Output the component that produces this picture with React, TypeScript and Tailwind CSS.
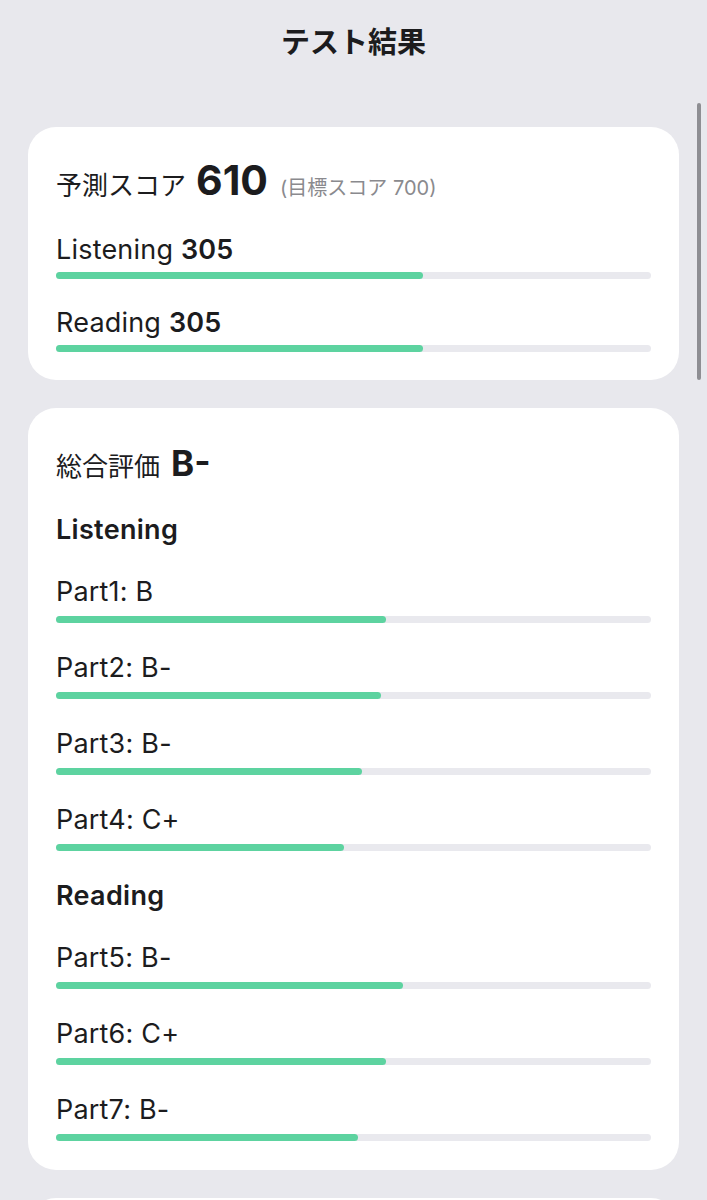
import React from "react";

type Part = { label: string; grade: string; ratio: number };

const listeningParts: Part[] = [
  { label: "Part1", grade: "B", ratio: 0.554 },
  { label: "Part2", grade: "B-", ratio: 0.546 },
  { label: "Part3", grade: "B-", ratio: 0.514 },
  { label: "Part4", grade: "C+", ratio: 0.484 },
];

const readingParts: Part[] = [
  { label: "Part5", grade: "B-", ratio: 0.583 },
  { label: "Part6", grade: "C+", ratio: 0.555 },
  { label: "Part7", grade: "B-", ratio: 0.508 },
];

const font = "font-['Inter','Noto_Sans_CJK_JP',sans-serif]";

function Bar({ ratio, className = "" }: { ratio: number; className?: string }) {
  return (
    <div className={`h-[7px] w-full rounded-full bg-[#e9e9ee] ${className}`}>
      <div
        className="h-full rounded-full bg-[#5dd3a0]"
        style={{ width: `${ratio * 100}%` }}
      />
    </div>
  );
}

function PartRow({ part }: { part: Part }) {
  return (
    <div>
      <p className="text-[27px] leading-[30px] tracking-[0.2px]">
        {part.label}: {part.grade}
      </p>
      <Bar ratio={part.ratio} className="mt-[9px]" />
    </div>
  );
}

export default function App() {
  return (
    <div className={`relative min-h-screen bg-[#e8e8ed] text-[#1c1c1e] ${font}`}>
      {/* scroll indicator */}
      <div className="absolute right-[6px] top-[103px] h-[277px] w-[4px] rounded-full bg-[#8e8e93]" />

      <header className="flex h-[80px] items-center justify-center">
        <h1 className="font-['Noto_Sans_CJK_JP',sans-serif] text-[29px] font-bold leading-[36px]">
          テスト結果
        </h1>
      </header>

      <div className="mx-[28px] mt-[47px] flex flex-col gap-[28px] pb-10">
        {/* predicted score */}
        <section className="rounded-[28px] bg-white px-[28px] pb-[28px] pt-[29px]">
          <div className="flex items-baseline">
            <span className="text-[26px] leading-[30px]">予測スコア</span>
            <span className="ml-[10px] text-[41px] font-bold leading-[48px]">610</span>
            <span className="ml-[12px] text-[20px] leading-[24px] text-[#8a8a8e]">
              (目標スコア 700)
            </span>
          </div>

          <div className="mt-[31px]">
            <p className="text-[27px] leading-[30px] tracking-[0.2px]">
              Listening <span className="font-semibold">305</span>
            </p>
            <Bar ratio={0.616} className="mt-[7px]" />
          </div>

          <div className="mt-[29px]">
            <p className="text-[27px] leading-[30px] tracking-[0.2px]">
              Reading <span className="font-semibold">305</span>
            </p>
            <Bar ratio={0.616} className="mt-[7px]" />
          </div>
        </section>

        {/* overall grade */}
        <section className="rounded-[28px] bg-white px-[28px] pb-[29px] pt-[35px]">
          <div className="flex items-baseline">
            <span className="text-[26px] leading-[30px]">総合評価</span>
            <span className="ml-[11px] text-[35px] font-bold leading-[41px]">B-</span>
          </div>

          <h2 className="mt-[31px] text-[27px] font-semibold leading-[30px] tracking-[0.3px]">
            Listening
          </h2>
          <div className="mt-[32px] flex flex-col gap-[30px]">
            {listeningParts.map((p) => (
              <PartRow key={p.label} part={p} />
            ))}
          </div>

          <h2 className="mt-[30px] text-[27px] font-semibold leading-[30px] tracking-[0.3px]">
            Reading
          </h2>
          <div className="mt-[32px] flex flex-col gap-[30px]">
            {readingParts.map((p) => (
              <PartRow key={p.label} part={p} />
            ))}
          </div>
        </section>

        {/* next card, cut off by the viewport */}
        <section className="h-[240px] rounded-[28px] bg-white" />
      </div>
    </div>
  );
}
